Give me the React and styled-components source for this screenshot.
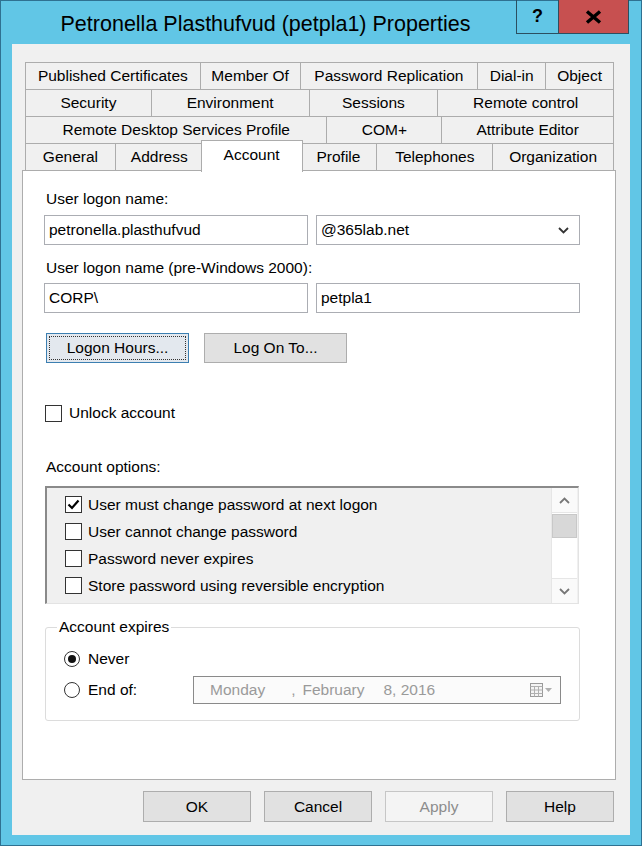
import React from 'react';
import styled, { createGlobalStyle } from 'styled-components';

const GlobalStyle = createGlobalStyle`
    body {
        margin: 0;
        background: #ffffff;
        font-family: "Liberation Sans", Arial, sans-serif;
    }
`;

const Window = styled.div`
    width: 642px;
    height: 846px;
    box-sizing: border-box;
    border: 1px solid #2f7191;
    background: #61c6e6;
    display: flex;
    flex-direction: column;
`;

const TitleBar = styled.div`
    height: 43px;
    display: flex;
    align-items: flex-start;
    flex-shrink: 0;
`;

const Title = styled.div`
    flex: 1;
    height: 43px;
    box-sizing: border-box;
    padding: 4px 0 0 14px;
    display: flex;
    align-items: center;
    justify-content: center;
    font-size: 21.5px;
    color: #000;
    white-space: nowrap;
`;

const CaptionButtons = styled.div`
    display: flex;
    margin: -1px 12px 0 0;
    border: 1px solid #2b4f60;
    border-top: none;
`;

const CaptionButton = styled.div`
    width: ${p => p.$w}px;
    height: 33px;
    display: flex;
    align-items: center;
    justify-content: center;
    background: ${p => (p.$close ? '#c75050' : 'transparent')};
    border-left: ${p => (p.$close ? '1px solid #2b4f60' : 'none')};
    font-size: 18px;
    font-weight: bold;
    color: #000;
`;

const Client = styled.div`
    margin: 0 11px;
    width: 618px;
    height: 791px;
    box-sizing: border-box;
    background: #f0f0f0;
    padding: 18px 14px 0 10px;
`;

const TabStrip = styled.div`
    margin-left: 3px;
    width: 589px;
`;

const TabRow = styled.div`
    display: flex;
    height: 27px;
`;

const Tab = styled.div`
    position: relative;
    box-sizing: border-box;
    width: ${p => (p.$active ? p.$w + 4 : p.$w)}px;
    height: ${p => (p.$active ? 32 : 28)}px;
    margin: ${p => (p.$active ? '-3px -2px 0 -3px' : '0 0 0 -1px')};
    &:first-child {
        margin-left: ${p => (p.$active ? '-2px' : '0')};
    }
    border: 1px solid #acacac;
    border-bottom: ${p => (p.$active ? 'none' : '1px solid #acacac')};
    background: ${p => (p.$active ? '#ffffff' : '#f0f0f0')};
    z-index: ${p => (p.$active ? 2 : 1)};
    display: flex;
    align-items: center;
    justify-content: center;
    padding-bottom: ${p => (p.$active ? 4 : 0)}px;
    font-size: 15.5px;
    color: #000;
    white-space: nowrap;
`;

const Panel = styled.div`
    width: 594px;
    height: 610px;
    box-sizing: border-box;
    border: 1px solid #adadad;
    background: #ffffff;
    padding: 19px 0 0 21px;
    display: flex;
    flex-direction: column;
    align-items: flex-start;
`;

const Label = styled.div`
    margin: ${p => p.$mt || 0}px 0 0 2px;
    height: 18px;
    line-height: 18px;
    font-size: 15.5px;
    color: #000;
`;

const FieldRow = styled.div`
    display: flex;
    gap: 8px;
    margin-top: ${p => p.$mt || 0}px;
`;

const Field = styled.div`
    width: 264px;
    height: 30px;
    box-sizing: border-box;
    border: 1px solid #abadb3;
    background: #fff;
    padding: 0 10px 0 4px;
    display: flex;
    align-items: center;
    justify-content: space-between;
    font-size: 15.5px;
    color: #000;
`;

const ButtonRow = styled.div`
    display: flex;
    gap: ${p => p.$gap}px;
    margin: ${p => p.$m};
    justify-content: ${p => p.$justify || 'flex-start'};
    width: ${p => p.$width || 'auto'};
`;

const Button = styled.div`
    width: ${p => p.$w}px;
    height: ${p => p.$h}px;
    box-sizing: border-box;
    border: 1px solid ${p => (p.$focused ? '#3c7fb1' : p.$disabled ? '#c6c6c6' : '#adadad')};
    background: ${p => (p.$disabled ? '#f4f4f4' : p.$focused ? '#e3e8ee' : '#e1e1e1')};
    color: ${p => (p.$disabled ? '#8c8c8c' : '#000')};
    display: flex;
    align-items: center;
    justify-content: center;
    font-size: 15.5px;
    position: relative;
    ${p => p.$focused && `
        &::after {
            content: '';
            position: absolute;
            inset: 2px;
            border: 1px dotted #333;
        }
    `}
`;

const CheckRow = styled.div`
    display: flex;
    align-items: center;
    gap: ${p => p.$gap ?? 7}px;
    height: ${p => p.$h || 18}px;
    margin: ${p => p.$m || 0};
    font-size: 15.5px;
    color: #000;
`;

const Box = styled.div`
    width: 17px;
    height: 17px;
    box-sizing: border-box;
    border: 1px solid #333;
    background: #fff;
    display: flex;
    align-items: center;
    justify-content: center;
    flex-shrink: 0;
`;

const ListBox = styled.div`
    margin: 10px 0 0 1px;
    width: 534px;
    height: 118px;
    box-sizing: border-box;
    border-top: 2px solid #8a8a8a;
    border-left: 2px solid #8a8a8a;
    border-right: 1px solid #e3e3e3;
    border-bottom: 1px solid #e3e3e3;
    background: #f0f0f0;
    display: flex;
`;

const ListItems = styled.div`
    flex: 1;
    padding: 3px 0 0 18px;
    display: flex;
    flex-direction: column;
`;

const ListItem = styled.div`
    display: flex;
    align-items: center;
    gap: 6px;
    height: 27px;
    font-size: 15.5px;
    color: #000;
`;

const ScrollBar = styled.div`
    width: 25px;
    margin-right: 1px;
    background: #fafafa;
    border-left: 1px solid #e6e6e6;
    display: flex;
    flex-direction: column;
`;

const ScrollArrow = styled.div`
    height: 24px;
    display: flex;
    align-items: center;
    justify-content: center;
    border-${p => (p.$down ? 'top' : 'bottom')}: 1px solid #e6e6e6;
`;

const ScrollTrack = styled.div`
    flex: 1;
    padding-top: 1px;
    background: #ffffff;
`;

const Thumb = styled.div`
    height: 24px;
    box-sizing: border-box;
    background: #d8d8d8;
    border: 1px solid #c8c8c8;
`;

const Group = styled.fieldset`
    margin: 14px 0 0 1px;
    width: 535px;
    box-sizing: border-box;
    border: 1px solid #dcdcdc;
    border-radius: 3px;
    padding: 5px 0 16px 18px;
    min-width: 0;
`;

const Legend = styled.legend`
    margin-left: -7px;
    padding: 0 2px;
    font-size: 15.5px;
    line-height: 18px;
    color: #000;
`;

const Radio = styled.div`
    width: 16px;
    height: 16px;
    box-sizing: border-box;
    border: 1px solid #333;
    border-radius: 50%;
    background: #fff;
    display: flex;
    align-items: center;
    justify-content: center;
    flex-shrink: 0;
    &::after {
        content: '';
        display: ${p => (p.$checked ? 'block' : 'none')};
        width: 8px;
        height: 8px;
        border-radius: 50%;
        background: #111;
    }
`;

const RadioLabel = styled.div`
    display: flex;
    align-items: center;
    gap: 8px;
    width: ${p => p.$w || 'auto'};
    flex-shrink: 0;
`;

const DatePicker = styled.div`
    width: 368px;
    height: 28px;
    box-sizing: border-box;
    border: 1px solid #8a8a8a;
    background: #fbfbfb;
    padding: 0 8px 0 16px;
    display: flex;
    align-items: center;
    font-size: 15.5px;
    color: #9a9a9a;
`;

const DatePart = styled.span`
    margin-left: ${p => p.$ml || 0}px;
`;

const PickerIcon = styled.div`
    margin-left: auto;
    display: flex;
    align-items: center;
    gap: 2px;
`;

const Check = () => (
    <svg width="13" height="11" viewBox="0 0 13 11">
        <path d="M1.5 5.5 L5 9 L11.5 1.5" fill="none" stroke="#000" strokeWidth="2.2" />
    </svg>
);

const Chevron = ({ up, color = '#444' }) => (
    <svg width="11" height="7" viewBox="0 0 11 7">
        <path d={up ? 'M1 6 L5.5 1.5 L10 6' : 'M1 1 L5.5 5.5 L10 1'} fill="none" stroke={color} strokeWidth="1.8" />
    </svg>
);

const tabRows = [
    [['Published Certificates', 176], ['Member Of', 101], ['Password Replication', 179], ['Dial-in', 69], ['Object', 69]],
    [['Security', 127], ['Environment', 159], ['Sessions', 130], ['Remote control', 177]],
    [['Remote Desktop Services Profile', 303], ['COM+', 116], ['Attribute Editor', 173]],
    [['General', 91], ['Address', 89], ['Account', 98, true], ['Profile', 78], ['Telephones', 117], ['Organization', 122]],
];

const options = [
    ['User must change password at next logon', true],
    ['User cannot change password', false],
    ['Password never expires', false],
    ['Store password using reversible encryption', false],
];

const App = () => {
    return (
        <>
            <GlobalStyle />
            <Window>
                <TitleBar>
                    <Title>Petronella Plasthufvud (petpla1) Properties</Title>
                    <CaptionButtons>
                        <CaptionButton $w={41}>?</CaptionButton>
                        <CaptionButton $w={69} $close>
                            <svg width="17" height="14" viewBox="0 0 17 14">
                                <path d="M2 1.5 L15 12.5 M15 1.5 L2 12.5" stroke="#000" strokeWidth="3.4" />
                            </svg>
                        </CaptionButton>
                    </CaptionButtons>
                </TitleBar>
                <Client>
                    <TabStrip>
                        {tabRows.map((row, i) => (
                            <TabRow key={i}>
                                {row.map(([name, w, active]) => (
                                    <Tab key={name} $w={w} $active={active}>{name}</Tab>
                                ))}
                            </TabRow>
                        ))}
                    </TabStrip>
                    <Panel>
                        <Label>User logon name:</Label>
                        <FieldRow $mt={7}>
                            <Field>petronella.plasthufvud</Field>
                            <Field>
                                @365lab.net
                                <Chevron color="#333" />
                            </Field>
                        </FieldRow>
                        <Label $mt={14}>User logon name (pre-Windows 2000):</Label>
                        <FieldRow $mt={6}>
                            <Field>CORP\</Field>
                            <Field>petpla1</Field>
                        </FieldRow>
                        <ButtonRow $gap={15} $m="20px 0 0 2px">
                            <Button $w={143} $h={30} $focused>Logon Hours...</Button>
                            <Button $w={143} $h={30}>Log On To...</Button>
                        </ButtonRow>
                        <CheckRow $m="41px 0 0 1px">
                            <Box />
                            Unlock account
                        </CheckRow>
                        <Label $mt={36}>Account options:</Label>
                        <ListBox>
                            <ListItems>
                                {options.map(([text, checked]) => (
                                    <ListItem key={text}>
                                        <Box>{checked && <Check />}</Box>
                                        {text}
                                    </ListItem>
                                ))}
                            </ListItems>
                            <ScrollBar>
                                <ScrollArrow><Chevron up color="#777" /></ScrollArrow>
                                <ScrollTrack><Thumb /></ScrollTrack>
                                <ScrollArrow $down><Chevron color="#777" /></ScrollArrow>
                            </ScrollBar>
                        </ListBox>
                        <Group>
                            <Legend>Account expires</Legend>
                            <CheckRow $h={18} $m="9px 0 0 0">
                                <RadioLabel>
                                    <Radio $checked />
                                    Never
                                </RadioLabel>
                            </CheckRow>
                            <CheckRow $h={28} $m="8px 0 0 0" $gap={0}>
                                <RadioLabel $w="129px">
                                    <Radio />
                                    End of:
                                </RadioLabel>
                                <DatePicker>
                                    <DatePart>Monday</DatePart>
                                    <DatePart $ml={26}>,</DatePart>
                                    <DatePart $ml={7}>February</DatePart>
                                    <DatePart $ml={19}>8, 2016</DatePart>
                                    <PickerIcon>
                                        <svg width="13" height="14" viewBox="0 0 13 14">
                                            <rect x="0.5" y="0.5" width="12" height="13" fill="#f4f4f4" stroke="#9a9a9a" />
                                            <path d="M0.5 3.5 H12.5 M4.5 3.5 V13.5 M8.5 3.5 V13.5 M0.5 7 H12.5 M0.5 10.5 H12.5" stroke="#b0b0b0" />
                                        </svg>
                                        <svg width="7" height="4" viewBox="0 0 7 4">
                                            <path d="M0 0 H7 L3.5 4 Z" fill="#b0b0b0" />
                                        </svg>
                                    </PickerIcon>
                                </DatePicker>
                            </CheckRow>
                        </Group>
                    </Panel>
                    <ButtonRow $gap={13} $m="11px 0 0 0" $justify="flex-end" $width="592px">
                        <Button $w={108} $h={31}>OK</Button>
                        <Button $w={108} $h={31}>Cancel</Button>
                        <Button $w={108} $h={31} $disabled>Apply</Button>
                        <Button $w={108} $h={31}>Help</Button>
                    </ButtonRow>
                </Client>
            </Window>
        </>
    );
};

export default App;
